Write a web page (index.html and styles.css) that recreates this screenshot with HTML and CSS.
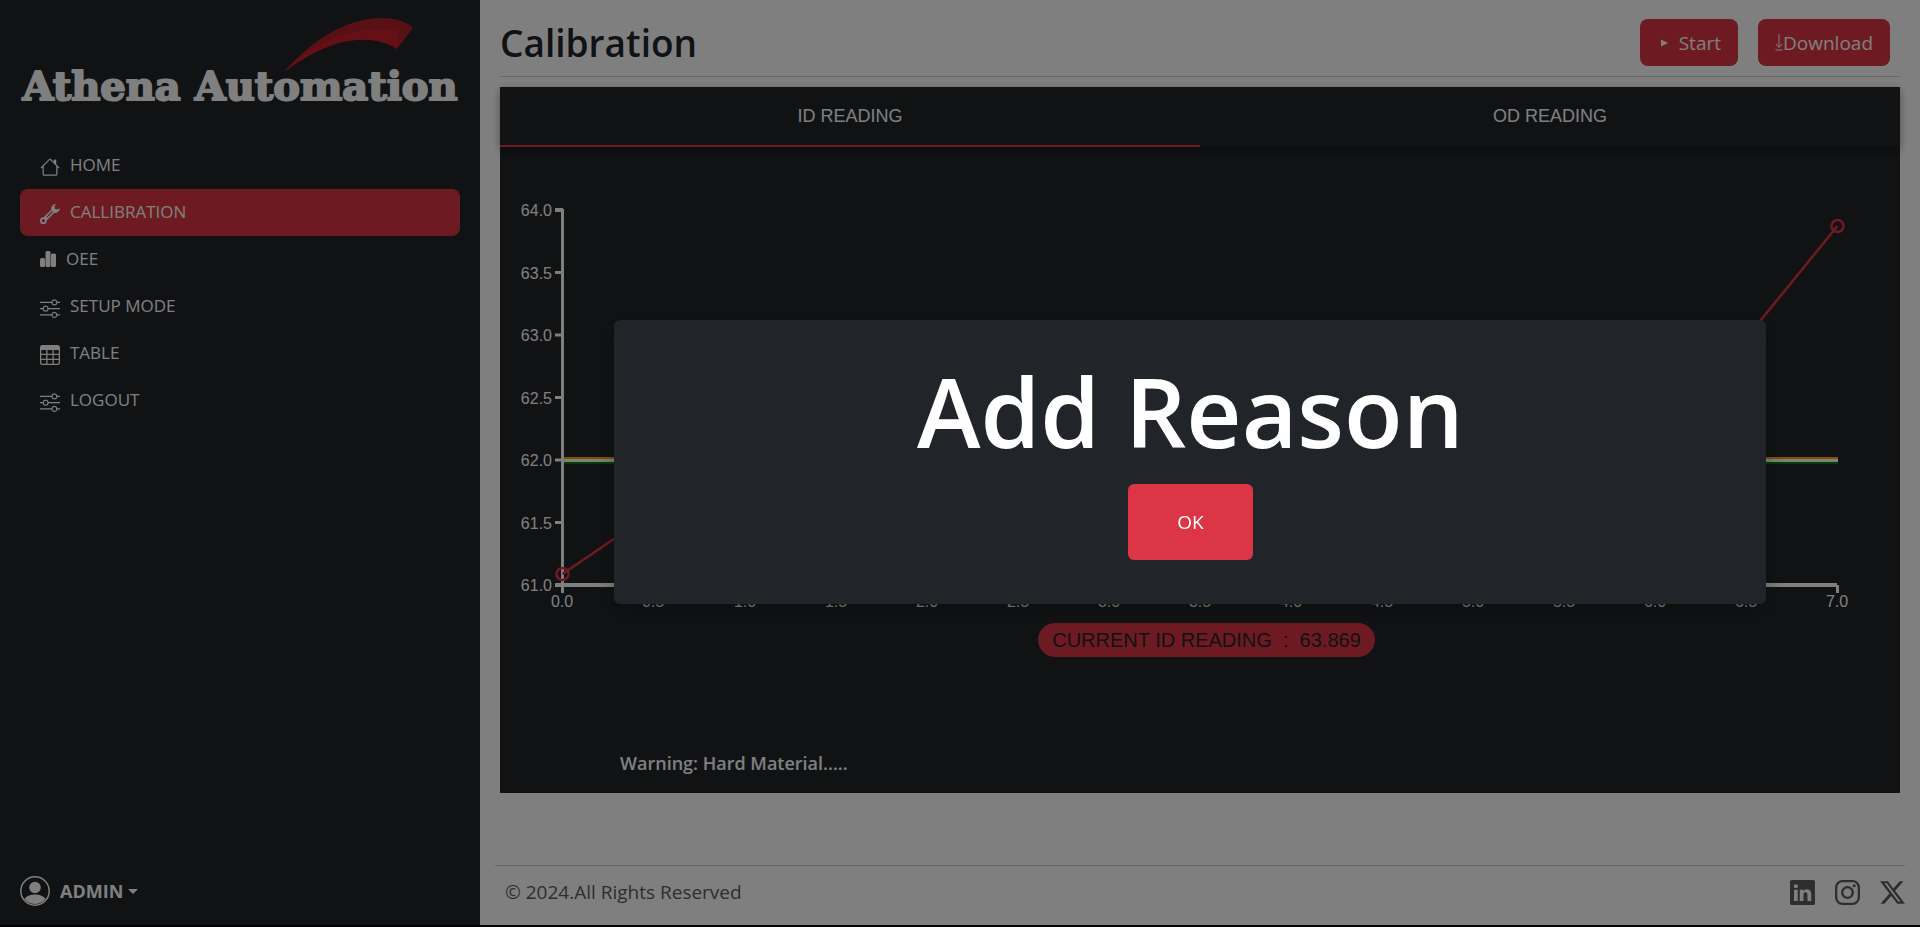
FILE: index.html
```html
<!DOCTYPE html>
<html lang="en">
<head>
<meta charset="utf-8">
<meta name="viewport" content="width=device-width, initial-scale=1">
<title>Athena Automation - Calibration</title>
<link rel="stylesheet" href="styles.css">
</head>
<body>
<div class="layout">
  <aside class="sidebar">
    <a class="brand" href="#" aria-label="Athena Automation">
      <svg class="brand-logo" viewBox="0 0 440 98">
        <path d="M264 58C290 28 325 4 362 4C376 4 387 8 393 14L377 35C364 26 350 25 336 26C310 28 286 42 264 58Z" fill="#b3212b"/>
        <path d="M264 58C292 30 328 16 350 16C362 15 372 17 381 14C375 22 378 26 377 35C364 26 350 25 336 26C310 28 286 42 264 58Z" fill="#cc1f2a"/>
        <text class="brand-text" x="220" y="86" text-anchor="middle">Athena Automation</text>
      </svg>
    </a>
    <nav class="menu">
      <a class="menu-link" href="#"><svg class="icon" viewBox="0 0 16 16"><path d="M8.707 1.5a1 1 0 0 0-1.414 0L.646 8.146a.5.5 0 0 0 .708.708L2 8.207V13.5A1.5 1.5 0 0 0 3.5 15h9a1.5 1.5 0 0 0 1.5-1.5V8.207l.646.647a.5.5 0 0 0 .708-.708L13 5.793V2.5a.5.5 0 0 0-.5-.5h-1a.5.5 0 0 0-.5.5v1.293zM13 7.207V13.5a.5.5 0 0 1-.5.5h-9a.5.5 0 0 1-.5-.5V7.207l5-5z"/></svg>HOME</a>
      <a class="menu-link active" href="#" aria-current="page"><svg class="icon" viewBox="0 0 16 16"><path d="M2.6 13.4L12 4" stroke="currentColor" stroke-width="3.6"/><circle cx="2.7" cy="13.3" r="2.7"/><path d="M12.800 0A4 4 0 0 0 9 5.200L10.800 7A4 4 0 0 0 16 3.300L14 4.400L12 4L11.600 2Z"/><circle class="cut" cx="2.700" cy="13.300" r="1.300"/><path class="cut-line" d="M5.500 10.500L10 6"/></svg>CALLIBRATION</a>
      <a class="menu-link" href="#"><svg class="icon icon-small" viewBox="0 0 16 16"><rect x="0" y="7" width="5" height="9" rx="1.500"/><rect x="5.500" y="0" width="5" height="16" rx="1.500"/><rect x="11" y="2.500" width="5" height="13.500" rx="1.500"/></svg>OEE</a>
      <a class="menu-link" href="#"><svg class="icon" viewBox="0 0 16 16"><path fill-rule="evenodd" d="M11.500 2a1.500 1.500 0 1 0 0 3 1.500 1.500 0 0 0 0-3M9.050 3a2.500 2.500 0 0 1 4.900 0H16v1h-2.050a2.500 2.500 0 0 1-4.900 0H0V3zM4.500 7a1.500 1.500 0 1 0 0 3 1.500 1.500 0 0 0 0-3M2.050 8a2.500 2.500 0 0 1 4.900 0H16v1H6.950a2.500 2.500 0 0 1-4.900 0H0V8zm9.450 4a1.500 1.500 0 1 0 0 3 1.500 1.500 0 0 0 0-3m-2.450 1a2.500 2.500 0 0 1 4.900 0H16v1h-2.050a2.500 2.500 0 0 1-4.900 0H0v-1z"/></svg>SETUP MODE</a>
      <a class="menu-link" href="#"><svg class="icon" viewBox="0 0 16 16"><path d="M0 2a2 2 0 0 1 2-2h12a2 2 0 0 1 2 2v12a2 2 0 0 1-2 2H2a2 2 0 0 1-2-2zm15 2h-4v3h4zm0 4h-4v3h4zm0 4h-4v3h3a1 1 0 0 0 1-1zm-5 3v-3H6v3zm-5 0v-3H1v2a1 1 0 0 0 1 1zm-4-4h4V8H1zm0-4h4V4H1zm5-3v3h4V4zm4 4H6v3h4z"/></svg>TABLE</a>
      <a class="menu-link" href="#"><svg class="icon" viewBox="0 0 16 16"><path fill-rule="evenodd" d="M11.500 2a1.500 1.500 0 1 0 0 3 1.500 1.500 0 0 0 0-3M9.050 3a2.500 2.500 0 0 1 4.900 0H16v1h-2.050a2.500 2.500 0 0 1-4.900 0H0V3zM4.500 7a1.500 1.500 0 1 0 0 3 1.500 1.500 0 0 0 0-3M2.050 8a2.500 2.500 0 0 1 4.900 0H16v1H6.950a2.500 2.500 0 0 1-4.900 0H0V8zm9.450 4a1.500 1.500 0 1 0 0 3 1.500 1.500 0 0 0 0-3m-2.450 1a2.500 2.500 0 0 1 4.900 0H16v1h-2.050a2.500 2.500 0 0 1-4.900 0H0v-1z"/></svg>LOGOUT</a>
    </nav>
    <button class="account" type="button" aria-haspopup="true">
      <svg class="avatar" viewBox="0 0 30 30"><circle cx="15" cy="15" r="14.200" fill="none" stroke="currentColor" stroke-width="1.500"/><circle cx="15" cy="11.500" r="5.800"/><path d="M4.500 23C7 19.500 11 18.500 15 18.500S23 19.500 25.500 23A13.400 13.400 0 0 1 4.500 23Z"/></svg>
      ADMIN
      <span class="caret"></span>
    </button>
  </aside>

  <main class="main">
    <header class="page-head">
      <h1 class="title">Calibration</h1>
      <div class="actions">
        <button class="btn" type="button"><svg class="play" viewBox="0 0 8 8"><path d="M0 0L8 4L0 8Z"/></svg>Start</button>
        <button class="btn" type="button"><svg class="down" viewBox="0 0 8 17"><path d="M4 0V13M1 10L4 13.500L7 10M.5 16H7.500" fill="none" stroke="currentColor"/></svg>Download</button>
      </div>
    </header>

    <section class="panel">
      <div class="tabs" role="tablist">
        <button class="tab selected" type="button" role="tab" aria-selected="true">ID READING</button>
        <button class="tab" type="button" role="tab" aria-selected="false">OD READING</button>
      </div>
      <svg class="chart" viewBox="0 0 1400 466" role="img" aria-label="ID reading chart">
        <g class="axis">
          <path d="M62.500 62V446"/>
          <path d="M55 63H63M55 438H63M61 438H1337" stroke-width="4"/>
          <path d="M55 125.500H63M55 188H63M55 250.500H63M55 313H63M55 375.500H63M1337.500 438V446"/>
          <path d="M153.500 438V446M244.500 438V446M335.500 438V446M427 438V446M518 438V446M609 438V446M700 438V446M791 438V446M882 438V446M973 438V446M1064 438V446M1155.500 438V446M1246.500 438V446"/>
        </g>
        <g class="limits">
          <path class="upper" d="M64 311.500H1338"/>
          <path class="lower" d="M64 315.500H1338"/>
          <path class="target" d="M64 313.500H1338"/>
        </g>
        <polyline class="series" points="62.500,427 244.500,303 426.500,303 609,303 791,303 973,303 1155,303 1337.500,79"/>
        <g class="dots"><circle cx="62.500" cy="427" r="6"/><circle cx="1337.500" cy="79" r="6"/></g>
        <g class="labels labels-y">
          <text x="52" y="69">64.0</text><text x="52" y="132">63.5</text><text x="52" y="194">63.0</text><text x="52" y="257">62.5</text><text x="52" y="319">62.0</text><text x="52" y="382">61.5</text><text x="52" y="444">61.0</text>
        </g>
        <g class="labels labels-x">
          <text x="62" y="460">0.0</text><text x="153" y="460">0.5</text><text x="245" y="460">1.0</text><text x="336" y="460">1.5</text><text x="427" y="460">2.0</text><text x="518" y="460">2.5</text><text x="609" y="460">3.0</text><text x="700" y="460">3.5</text><text x="791" y="460">4.0</text><text x="882" y="460">4.5</text><text x="973" y="460">5.0</text><text x="1064" y="460">5.5</text><text x="1155" y="460">6.0</text><text x="1246" y="460">6.5</text><text x="1337" y="460">7.0</text>
        </g>
      </svg>
      <div class="reading-row"><span class="reading">CURRENT ID READING&nbsp; :&nbsp; 63.869</span></div>
      <p class="warning">Warning: Hard Material.....</p>
    </section>

    <footer class="footer">
      <span>© 2024.All Rights Reserved</span>
      <div class="social">
        <a href="#" aria-label="LinkedIn"><svg viewBox="0 0 16 16"><path d="M0 1.146C0 .513.526 0 1.175 0h13.650C15.474 0 16 .513 16 1.146v13.708c0 .633-.526 1.146-1.175 1.146H1.175C.526 16 0 15.487 0 14.854zm4.943 12.248V6.169H2.542v7.225zm-1.200-8.212c.837 0 1.358-.554 1.358-1.248-.015-.709-.520-1.248-1.342-1.248S2.400 3.226 2.400 3.934c0 .694.521 1.248 1.327 1.248zm4.908 8.212V9.359c0-.216.016-.432.080-.586.173-.431.568-.878 1.232-.878.869 0 1.216.662 1.216 1.634v3.865h2.401V9.250c0-2.220-1.184-3.252-2.764-3.252-1.274 0-1.845.700-2.165 1.193v.025h-.016l.016-.025V6.169h-2.400c.030.678 0 7.225 0 7.225z"/></svg></a>
        <a href="#" aria-label="Instagram"><svg viewBox="0 0 16 16"><rect x=".75" y=".75" width="14.500" height="14.500" rx="4" fill="none" stroke="currentColor" stroke-width="1.500"/><circle cx="8" cy="8" r="3.400" fill="none" stroke="currentColor" stroke-width="1.500"/><circle cx="12.270" cy="3.730" r=".96"/></svg></a>
        <a href="#" aria-label="X"><svg viewBox="0 0 16 16"><path d="M12.600.750h2.454l-5.360 6.142L16 15.250h-4.937l-3.867-5.070-4.425 5.070H.316l5.733-6.570L0 .750h5.063l3.495 4.633L12.601.750Zm-.860 13.028h1.360L4.323 2.145H2.865z"/></svg></a>
      </div>
    </footer>
  </main>
</div>

<div class="backdrop">
  <div class="dialog" role="dialog" aria-modal="true" aria-labelledby="dialog-title">
    <h2 class="dialog-title" id="dialog-title">Add Reason</h2>
    <button class="ok" type="button">OK</button>
  </div>
</div>
</body>
</html>
```
FILE: styles.css
```css
* { box-sizing: border-box; }

body {
  margin: 0;
  background: #000;
  color: #212529;
  font-family: "Open Sans", "Noto Sans", sans-serif;
  font-size: 19px;
  line-height: 30px;
}

button { font: inherit; color: inherit; border: 0; cursor: pointer; }
a { color: inherit; text-decoration: none; }
svg { display: block; fill: currentColor; flex: none; }

.layout {
  display: grid;
  grid-template-columns: 25% 1fr;
  min-height: calc(100vh - 2px);
}

/* Sidebar */
.sidebar {
  display: flex;
  flex-direction: column;
  padding: 14px 20px;
  background: #212529;
  color: #fff;
}
.brand-logo { width: 100%; height: auto; }
.brand-text {
  font-family: "DejaVu Serif", serif;
  font-weight: 700;
  font-size: 40px;
  fill: #fff;
  stroke: #fff;
  stroke-width: 2;
  stroke-linejoin: round;
}
.menu { display: flex; flex-direction: column; margin-top: 30px; font-size: 17px; }
.menu-link {
  display: flex;
  align-items: center;
  gap: 10px;
  height: 47px;
  padding: 0 20px 2px;
  border-radius: 8px;
}
.menu-link.active { background: #dc3545; }
.icon { width: 20px; height: 20px; margin-top: 4px; }
.icon-small { width: 16px; height: 16px; margin-top: 0; }
.cut { fill: #dc3545; }
.cut-line { stroke: #dc3545; }
.account {
  display: flex;
  align-items: center;
  gap: 10px;
  margin-top: auto;
  padding: 0 0 5px;
  background: none;
  font-size: 18px;
  font-weight: 700;
}
.avatar { width: 30px; height: 30px; }
.caret {
  margin-left: -5px;
  border: 5px solid transparent;
  border-top-color: currentColor;
  border-bottom: 0;
}

/* Main column */
.main {
  display: flex;
  flex-direction: column;
  min-width: 0;
  padding: 0 15px;
  background: #fff;
}
.page-head {
  display: flex;
  justify-content: space-between;
  align-items: center;
  margin: 0 5px 10px;
  padding: 19px 10px 10px 0;
  border-bottom: 1px solid #d0d1d2;
}
.title { margin: 0; font-size: 37px; line-height: 47px; font-weight: 600; }
.actions { display: flex; gap: 20px; }
.btn {
  display: flex;
  align-items: center;
  height: 47px;
  padding: 0 17px;
  border-radius: 8px;
  background: #dc3545;
  color: #fff;
}
.play { width: 7px; height: 8px; margin: 0 11px 0 4px; }
.down { width: 8px; height: 17px; }

.panel { margin: 0 5px; background: #212529; color: #fff; }
.tabs {
  display: grid;
  grid-template-columns: 1fr 1fr;
  background: #212529;
  box-shadow: 0 3px 8px rgba(0, 0, 0, 0.4);
}
.tab {
  height: 60px;
  padding: 0;
  border-bottom: 2px solid transparent;
  background: none;
  font-family: "Liberation Sans", Arial, sans-serif;
  font-size: 18px;
}
.tab.selected { border-bottom-color: #dc3545; }

.chart { width: 100%; height: auto; }
.axis { fill: none; stroke: #fff; stroke-width: 3; }
.limits { fill: none; stroke-width: 3; }
.upper { stroke: #ffa500; }
.lower { stroke: #008000; }
.target { stroke: #fff; }
.series { fill: none; stroke: #dc3545; stroke-width: 2.5; }
.dots { fill: none; stroke: #dc3545; stroke-width: 2.5; }
.labels { font-family: "Liberation Sans", Arial, sans-serif; font-size: 16px; fill: #fff; }
.labels-y { text-anchor: end; }
.labels-x { text-anchor: middle; }

.reading-row { display: flex; justify-content: center; margin-top: 10px; padding-left: 13px; }
.reading {
  padding: 2px 14px;
  border-radius: 17px;
  background: #dc3545;
  color: #212529;
  font-family: "Liberation Sans", Arial, sans-serif;
  font-size: 20px;
}
.warning { margin: 0; padding: 91px 120px 15px; font-size: 18px; font-weight: 600; }

.footer {
  display: flex;
  justify-content: space-between;
  align-items: center;
  margin-top: auto;
  padding: 11px 0 18px 10px;
  border-top: 1px solid #d0d1d2;
  color: #595c5f;
}
.social { display: flex; gap: 20px; }
.social svg { width: 25px; height: 25px; }

/* Modal */
.backdrop {
  position: fixed;
  inset: 0;
  display: flex;
  align-items: center;
  padding-bottom: 3px;
  background: rgba(0, 0, 0, 0.5);
}
.dialog {
  width: 60%;
  margin-left: 32%;
  padding: 36px 20px 44px;
  border-radius: 6px;
  background: #212529;
  box-shadow: 0 5px 20px rgba(0, 0, 0, 0.3);
  color: #fff;
  text-align: center;
}
.dialog-title { margin: 0 0 18px; font-size: 96px; line-height: 110px; font-weight: 600; }
.ok {
  min-width: 125px;
  height: 76px;
  border-radius: 6px;
  background: #dc3545;
  color: #fff;
  font-weight: 500;
}
```
